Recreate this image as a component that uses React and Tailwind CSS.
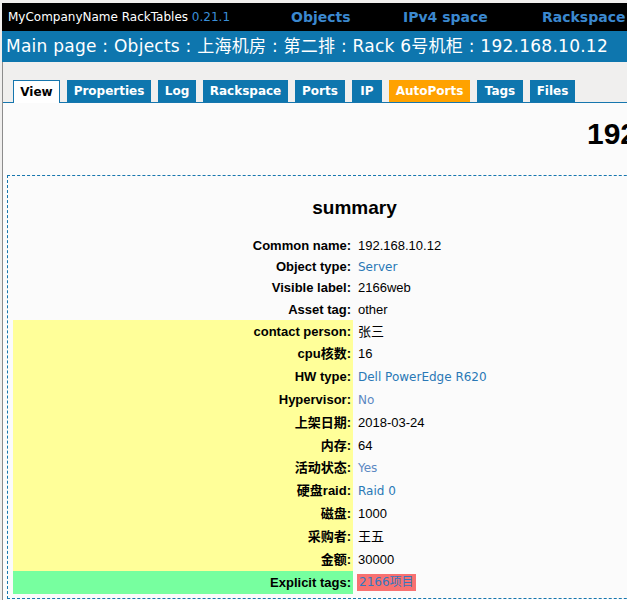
const sans = "font-['Liberation_Sans','Noto_Sans_CJK_SC',sans-serif]"
const verd = "font-['DejaVu_Sans','Noto_Sans_CJK_SC',sans-serif]"

const tabs = [
  { name: 'View', w: 'w-[47px]', kind: 'active' },
  { name: 'Properties', w: 'w-[84px]' },
  { name: 'Log', w: 'w-[38px]' },
  { name: 'Rackspace', w: 'w-[85px]' },
  { name: 'Ports', w: 'w-[50px]' },
  { name: 'IP', w: 'w-[30px]' },
  { name: 'AutoPorts', w: 'w-[81px]', kind: 'orange' },
  { name: 'Tags', w: 'w-[46px]' },
  { name: 'Files', w: 'w-[45px]' },
]

const rows = [
  { label: 'Common name:', value: '192.168.10.12' },
  { label: 'Object type:', value: 'Server', link: 'dark' },
  { label: 'Visible label:', value: '2166web' },
  { label: 'Asset tag:', value: 'other' },
  { label: 'contact person:', value: '张三', attr: true },
  { label: 'cpu核数:', value: '16', attr: true },
  { label: 'HW type:', value: 'Dell PowerEdge R620', link: 'dark', attr: true },
  { label: 'Hypervisor:', value: 'No', link: 'light', attr: true },
  { label: '上架日期:', value: '2018-03-24', attr: true },
  { label: '内存:', value: '64', attr: true },
  { label: '活动状态:', value: 'Yes', link: 'light', attr: true },
  { label: '硬盘raid:', value: 'Raid 0', link: 'dark', attr: true },
  { label: '磁盘:', value: '1000', attr: true },
  { label: '采购者:', value: '王五', attr: true },
  { label: '金额:', value: '30000', attr: true },
]

function Tab({ tab }) {
  if (tab.kind === 'active') {
    return (
      <div
        className={`${tab.w} h-[23px] -mb-px flex items-center justify-center bg-white border border-b-0 border-[#1676ae] text-black text-[12px] font-bold ${verd}`}
      >
        {tab.name}
      </div>
    )
  }
  return (
    <div
      className={`${tab.w} h-[22px] flex items-center justify-center text-white text-[12px] font-bold ${verd} ${
        tab.kind === 'orange' ? 'bg-[#ffa200]' : 'bg-[#0e76ae]'
      }`}
    >
      {tab.name}
    </div>
  )
}

function Value({ row }) {
  if (row.link === 'dark') {
    return <span className={`text-[12px] text-[#2a78b6] ${verd}`}>{row.value}</span>
  }
  if (row.link === 'light') {
    return <span className={`text-[12px] text-[#5b88c2] ${verd}`}>{row.value}</span>
  }
  return <span className={`text-[13px] text-black ${sans}`}>{row.value}</span>
}

export default function App() {
  return (
    <div className="w-[627px] h-[600px] overflow-hidden bg-[#f0efee] pt-[3px] pl-[2px]">
      <div className="w-[1400px]">
        {/* Top bar */}
        <div className="h-[28px] bg-black flex items-center">
          <div className={`w-[289px] pl-[6px] text-[12px] ${verd}`}>
            <span className="text-white">MyCompanyName RackTables </span>
            <span className="text-[#3b8fd8]">0.21.1</span>
          </div>
          <div className={`w-[112px] text-[14px] font-bold text-[#3b88cf] ${verd}`}>Objects</div>
          <div className={`w-[139px] text-[14px] font-bold text-[#3b88cf] ${verd}`}>IPv4 space</div>
          <div className={`text-[14px] font-bold text-[#3b88cf] ${verd}`}>Rackspace</div>
        </div>

        {/* Breadcrumb */}
        <div
          className={`h-[31px] bg-[#0e76ae] flex items-center pl-[4px] text-white text-[17px] tracking-[0.25px] ${verd}`}
        >
          Main page : Objects : 上海机房 : 第二排 : Rack 6号机柜 : 192.168.10.12
        </div>

        <div className="border-l border-[#8c8c8c]">
          {/* Tabs */}
          <div className="h-[41px] flex items-end gap-[7px] pl-[10px] border-b border-[#1676ae]">
            {tabs.map((t) => (
              <Tab key={t.name} tab={t} />
            ))}
          </div>

          {/* Content */}
          <div className="bg-[#fbfbfb] pt-[14px] pb-[40px]">
            <div className={`h-[58px] pl-[584px] text-[30px] font-bold text-black leading-[34px] ${sans}`}>
              192.168.10.12
            </div>

            <div className="ml-[4px] w-[695px] border border-dashed border-[#1676ae] pt-[21px] px-[5px] pb-[4px]">
              <div className={`text-center text-[19px] font-bold text-black leading-[22px] ${sans}`}>summary</div>
              <div className="mt-[16px]">
                {rows.map((r) => (
                  <div
                    key={r.label}
                    className={`flex items-stretch ${r.attr ? 'h-[22.8px]' : 'h-[21.25px]'}`}
                  >
                    <div
                      className={`w-[340px] flex items-center justify-end pr-[2px] text-[13px] font-bold text-black ${sans} ${
                        r.attr ? 'bg-[#ffff99]' : ''
                      }`}
                    >
                      {r.label}
                    </div>
                    <div className="flex items-center pl-[5px]">
                      <Value row={r} />
                    </div>
                  </div>
                ))}
                <div className="flex items-stretch h-[23px]">
                  <div
                    className={`w-[340px] flex items-center justify-end pr-[2px] bg-[#77ff9f] text-[13px] font-bold text-black ${sans}`}
                  >
                    Explicit tags:
                  </div>
                  <div className="flex items-center pl-[4px]">
                    <span className={`bg-[#f87171] px-[2px] leading-[17px] text-[12px] text-[#3577bf] ${verd}`}>
                      2166项目
                    </span>
                  </div>
                </div>
              </div>
            </div>
          </div>
        </div>
      </div>
    </div>
  )
}
